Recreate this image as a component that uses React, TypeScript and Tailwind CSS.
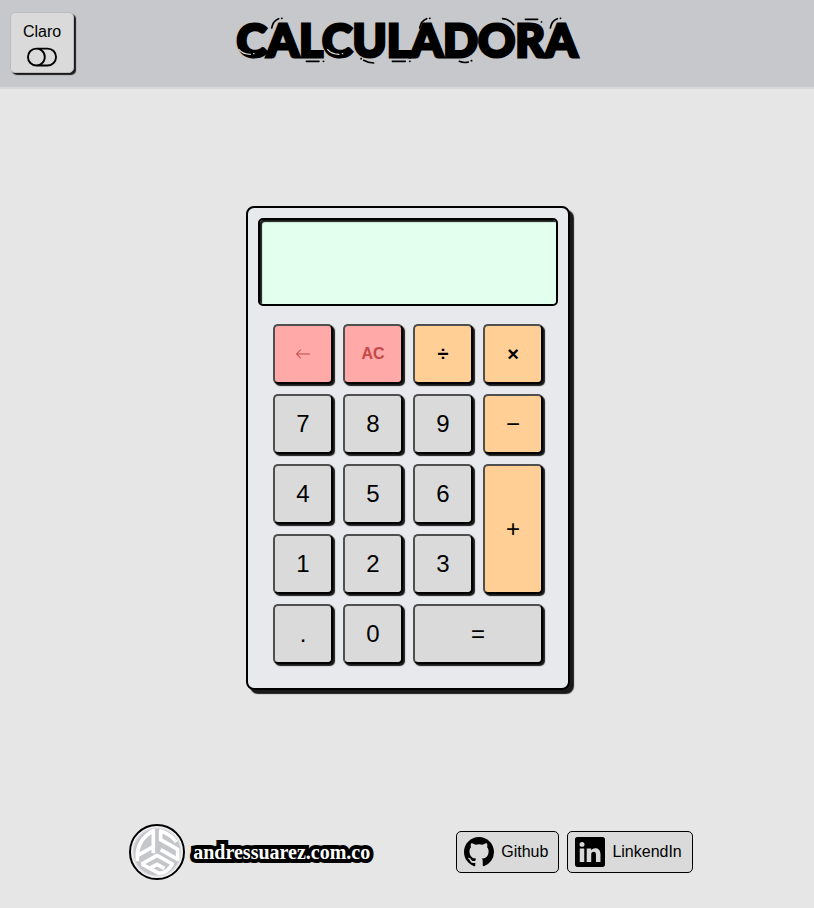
import { useState } from "react";
import { BsArrowLeft, BsGithub, BsLinkedin, BsToggleOff, BsToggleOn } from "react-icons/bs";

type Tone = "number" | "operator" | "strong" | "danger";

interface Key {
  id: string;
  label: string;
  tone: Tone;
  span?: string;
}

const KEYS: Key[] = [
  { id: "back", label: "Borrar", tone: "danger" },
  { id: "AC", label: "AC", tone: "danger" },
  { id: "÷", label: "÷", tone: "strong" },
  { id: "×", label: "×", tone: "strong" },
  { id: "7", label: "7", tone: "number" },
  { id: "8", label: "8", tone: "number" },
  { id: "9", label: "9", tone: "number" },
  { id: "−", label: "−", tone: "operator" },
  { id: "4", label: "4", tone: "number" },
  { id: "5", label: "5", tone: "number" },
  { id: "6", label: "6", tone: "number" },
  { id: "+", label: "+", tone: "operator", span: "row-span-2" },
  { id: "1", label: "1", tone: "number" },
  { id: "2", label: "2", tone: "number" },
  { id: "3", label: "3", tone: "number" },
  { id: ".", label: ".", tone: "number" },
  { id: "0", label: "0", tone: "number" },
  { id: "=", label: "=", tone: "number", span: "col-span-2" },
];

const TONES: Record<Tone, string> = {
  number: "bg-[#dadada] text-2xl text-black",
  operator: "bg-[#ffcf96] text-2xl text-black",
  strong: "bg-[#ffcf96] text-xl font-bold text-black",
  danger: "bg-[#ffa9a9] text-base font-bold text-[#c74848]",
};

// Evaluates left to right, with × and ÷ before + and −.
function evaluate(expression: string): string {
  const tokens = expression.match(/[\d.]+|[+−×÷]/g) ?? [];
  const terms: number[] = [];
  let operator = "+";
  for (const token of tokens) {
    if (/^[+−×÷]$/.test(token)) {
      operator = token;
      continue;
    }
    const value = Number(token);
    if (operator === "+") terms.push(value);
    else if (operator === "−") terms.push(-value);
    else {
      const last = terms.pop() ?? 0;
      terms.push(operator === "×" ? last * value : last / value);
    }
  }
  return terms.length ? String(terms.reduce((a, b) => a + b, 0)) : "";
}

// Small comic-style dashes around the title letters.
function TitleAccents() {
  return (
    <svg
      aria-hidden="true"
      viewBox="0 0 1140 261"
      className="pointer-events-none absolute -top-3 left-1/2 h-[87px] w-[380px] max-w-none -translate-x-1/2"
      fill="none"
      strokeLinecap="round"
      strokeWidth="5"
    >
      <g stroke="#000">
        <path d="M164 84Q168 62 185 56M194 55h1" />
        <path d="M608 84Q612 62 629 56M638 55h1" />
        <path d="M1000 84Q1004 62 1021 56M1030 55h1" />
        <path d="M268 184H306M319 184h1M526 184H565M578 184h1" />
        <path d="M440 181Q454 189 470 189M432 176h1M727 184Q741 190 754 186M763 182h1" />
        <path d="M857 56Q878 58 890 74M925 58H962M973 66h1" />
      </g>
      <g stroke="#dcdde0" strokeWidth="4">
        <path d="M66 149Q78 163 100 163M110 161h1M332 149Q344 163 366 163M376 161h1" />
      </g>
    </svg>
  );
}

function BrandMark() {
  return (
    <svg viewBox="0 0 168 168" className="size-14 shrink-0" aria-hidden="true">
      <circle cx="84" cy="84" r="81" fill="#f4f4f6" stroke="#000" strokeWidth="6" />
      <circle cx="84" cy="84" r="72" fill="#c5c6ca" stroke="#dedee2" strokeWidth="4" />
      <g fill="none" stroke="#fff" strokeWidth="11" strokeLinejoin="round">
        <path d="M25 112V86Q32 42 73 20V88M25 95 73 68" />
        <path d="M142 54Q124 30 95 21V47L146 76V106L95 77" />
        <path d="M38 120 84 94 130 120Q114 148 90 148L38 120M62 133 84 121 106 133" />
      </g>
    </svg>
  );
}

export default function App() {
  const [expression, setExpression] = useState("");
  const [dark, setDark] = useState(false);

  const press = (id: string) => {
    if (id === "AC") setExpression("");
    else if (id === "back") setExpression((value) => value.slice(0, -1));
    else if (id === "=") setExpression(evaluate);
    else setExpression((value) => value + id);
  };

  return (
    <div
      className={`flex min-h-screen flex-col font-['Liberation_Sans',Arial,sans-serif] text-base text-black ${
        dark ? "bg-[#8b8b8f]" : "bg-[#e6e6e6]"
      }`}
    >
      <header className="grid grid-cols-[1fr_auto_1fr] items-start border-b-2 border-[#d8d8da] bg-[#c7c8cc] px-2.5 pb-3.5 pt-3">
        <button
          type="button"
          role="switch"
          aria-checked={dark}
          onClick={() => setDark(!dark)}
          className="flex w-16 flex-col items-center justify-self-start rounded-[5px] border border-[#bcbcbe] bg-[#dadada] pt-[7px] shadow-[2px_2px_1px_#1a1a1a]"
        >
          <span>{dark ? "Oscuro" : "Claro"}</span>
          {dark ? (
            <BsToggleOn size={30} className="-mt-0.5" />
          ) : (
            <BsToggleOff size={30} className="-mt-0.5" />
          )}
        </button>
        <div className="relative">
          <h1 className="font-['Lato',sans-serif] text-[46px] leading-[56px] font-black [-webkit-text-stroke:3px_#000]">
            CALCULADORA
          </h1>
          <TitleAccents />
        </div>
      </header>

      <main className="flex flex-1 items-center justify-center pl-0.5">
        <section
          aria-label="Calculadora"
          className="rounded-lg border-2 border-black bg-[#e8e9ed] px-2.5 pb-6 pt-2.5 shadow-[4px_4px_1px_#1a1a1a]"
        >
          <output className="flex h-22 w-[300px] items-center justify-end overflow-hidden rounded-[5px] border-2 border-black bg-[#e3ffed] px-3 text-3xl shadow-[inset_2px_2px_1px_#1a1a1a]">
            {expression}
          </output>
          <div className="mt-[18px] grid auto-rows-[60px] grid-cols-[repeat(4,60px)] justify-center gap-2.5">
            {KEYS.map((key) => (
              <button
                key={key.id}
                type="button"
                aria-label={key.label}
                onClick={() => press(key.id)}
                className={`flex items-center justify-center rounded-[5px] border-2 border-t-[#4f4f4f] border-r-black border-b-black border-l-[#4f4f4f] shadow-[2px_2px_1px_#1a1a1a] ${TONES[key.tone]} ${key.span ?? ""}`}
              >
                {key.id === "back" ? <BsArrowLeft size={16} /> : key.label}
              </button>
            ))}
          </div>
        </section>
      </main>

      <footer className="flex flex-wrap items-center justify-center gap-x-[86px] gap-y-4 pb-7 pl-2 pt-[17px]">
        <a href="#sitio" className="flex items-center gap-2">
          <BrandMark />
          <span className="font-['Liberation_Serif',serif] text-xl leading-7 font-bold text-white [-webkit-text-stroke:8px_#000] [paint-order:stroke_fill]">
            andressuarez.com.co
          </span>
        </a>
        <nav className="flex gap-2" aria-label="Redes">
          <a
            href="#github"
            className="flex h-[42px] items-center gap-[7px] rounded-[5px] border border-black bg-[#dadada] pl-[7px] pr-2.5"
          >
            <BsGithub size={30} />
            Github
          </a>
          <a
            href="#linkedin"
            className="flex h-[42px] items-center gap-[7px] rounded-[5px] border border-black bg-[#dadada] pl-[7px] pr-2.5"
          >
            <BsLinkedin size={30} />
            LinkendIn
          </a>
        </nav>
      </footer>
    </div>
  );
}
